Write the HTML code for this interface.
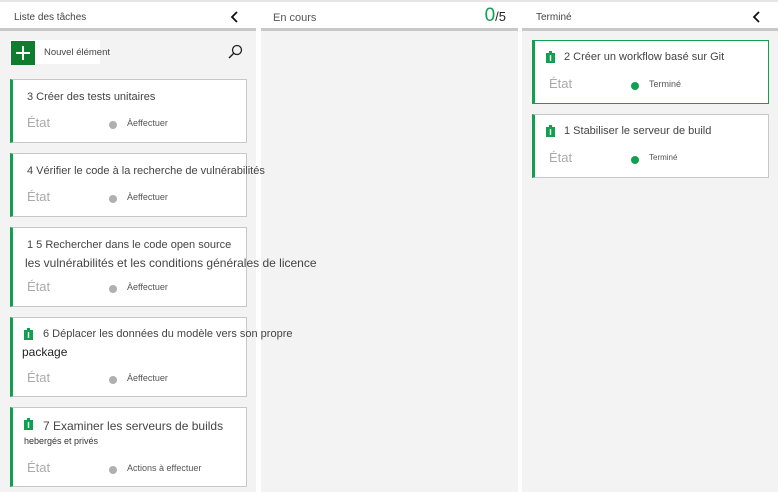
<!DOCTYPE html>
<html><head><meta charset="utf-8"><style>
*{margin:0;padding:0;box-sizing:border-box}
body{width:778px;height:494px;background:#fff;font-family:"Liberation Sans",sans-serif;position:relative;overflow:hidden;color:#333}
.topline{position:absolute;left:0;top:0;width:778px;height:2px;background:#e6e6e6}
.col{position:absolute;top:2px;bottom:2px;background:#f3f3f3}
.hdr{position:absolute;left:0;right:0;top:0;height:29px;background:#fff;border-bottom:3px solid #c8c8c8;font-size:10px;color:#444}
.hdr span{position:absolute;left:14px;top:10px}
.chev{position:absolute;top:9px;width:12px;height:12px}
.card{position:absolute;background:#fff;border:1px solid #c8c8c8;border-left:3px solid #10a050}
.t{position:absolute;font-size:11px;color:#444;white-space:nowrap}
.etat{position:absolute;left:14px;font-size:13px;color:#aaa}
.dot{position:absolute;left:96px;width:8px;height:8px;border-radius:50%;background:#b0b0b0}
.st{position:absolute;left:114px;font-size:9px;color:#555;white-space:nowrap}
.ic{position:absolute;width:9px;height:12px}
</style></head><body>
<div class="topline"></div>

<div class="col" style="left:261px;width:257px">
 <div class="hdr"><span style="left:12px;font-size:11px;color:#555">En cours</span>
  <div style="position:absolute;right:12px;top:3px;white-space:nowrap"><span style="position:static;font-size:19px;color:#10a050">0</span><span style="position:static;font-size:13px;color:#222">/5</span></div></div>
</div>

<div class="col" style="left:0;width:256px;z-index:2">
 <div class="hdr"><span>Liste des tâches</span>
  <svg class="chev" style="left:229px" viewBox="0 0 12 12"><path d="M8 1L3 6l5 5" stroke="#111" stroke-width="1.8" fill="none"/></svg></div>
 <div style="position:absolute;left:10px;top:38px;width:90px;height:24px;background:#fff"></div>
 <div style="position:absolute;left:11px;top:39px;width:24px;height:24px;background:#107c2e"></div>
 <svg style="position:absolute;left:11px;top:39px" width="24" height="24"><path d="M12 5v14M5 12h14" stroke="#fff" stroke-width="2"/></svg>
 <div style="position:absolute;left:44px;top:45px;font-size:9.5px;color:#444">Nouvel élément</div>
 <svg style="position:absolute;left:227px;top:42px" width="16" height="16"><circle cx="10" cy="6" r="4.5" stroke="#222" stroke-width="1.3" fill="none"/><path d="M7 9L2 14" stroke="#222" stroke-width="1.5"/></svg>

 <div class="card" style="left:10px;top:77px;width:237px;height:64px">
  <div class="t" style="left:14px;top:11px">3 Créer des tests unitaires</div>
  <div class="etat" style="top:35px">État</div><div class="dot" style="top:41px"></div><div class="st" style="top:38px">Àeffectuer</div></div>
 <div class="card" style="left:10px;top:151px;width:237px;height:64px">
  <div class="t" style="left:14px;top:11px">4 Vérifier le code à la recherche de vulnérabilités</div>
  <div class="etat" style="top:35px">État</div><div class="dot" style="top:41px"></div><div class="st" style="top:38px">Àeffectuer</div></div>
 <div class="card" style="left:10px;top:225px;width:237px;height:80px">
  <div class="t" style="left:14px;top:11px">1 5 Rechercher dans le code open source</div>
  <div class="t" style="left:12px;top:28px;font-size:12px">les vulnérabilités et les conditions générales de licence</div>
  <div class="etat" style="top:51px">État</div><div class="dot" style="top:57px"></div><div class="st" style="top:54px">Àeffectuer</div></div>
 <div class="card" style="left:10px;top:315px;width:237px;height:80px">
  <svg class="ic" style="left:11px;top:10px" viewBox="0 0 9 12"><rect x="0" y="2" width="9" height="10" fill="#10a050"/><rect x="3" y="0" width="3" height="3" fill="#10a050"/><rect x="3.8" y="4" width="1.4" height="6" fill="#fff"/></svg>
  <div class="t" style="left:30px;top:10px">6 Déplacer les données du modèle vers son propre</div>
  <div class="t" style="left:9px;top:27px;font-size:12px;color:#222">package</div>
  <div class="etat" style="top:52px">État</div><div class="dot" style="top:58px"></div><div class="st" style="top:55px">Àeffectuer</div></div>
 <div class="card" style="left:10px;top:405px;width:237px;height:80px">
  <svg class="ic" style="left:11px;top:10px" viewBox="0 0 9 12"><rect x="0" y="2" width="9" height="10" fill="#10a050"/><rect x="3" y="0" width="3" height="3" fill="#10a050"/><rect x="3.8" y="4" width="1.4" height="6" fill="#fff"/></svg>
  <div class="t" style="left:30px;top:11px;font-size:12px">7 Examiner les serveurs de builds</div>
  <div class="t" style="left:11px;top:28px;font-size:9px;color:#333">hebergés et privés</div>
  <div class="etat" style="top:52px">État</div><div class="dot" style="top:58px"></div><div class="st" style="top:55px">Actions à effectuer</div></div>
</div>

<div class="col" style="left:522px;width:256px">
 <div class="hdr"><span>Terminé</span>
  <svg class="chev" style="left:229px" viewBox="0 0 12 12"><path d="M8 1L3 6l5 5" stroke="#111" stroke-width="1.8" fill="none"/></svg></div>
 <div class="card" style="left:10px;top:38px;width:237px;height:64px;border-color:#10a050">
  <svg class="ic" style="left:11px;top:10px" viewBox="0 0 9 12"><rect x="0" y="2" width="9" height="10" fill="#10a050"/><rect x="3" y="0" width="3" height="3" fill="#10a050"/><rect x="3.8" y="4" width="1.4" height="6" fill="#fff"/></svg>
  <div class="t" style="left:29px;top:10px">2 Créer un workflow basé sur Git</div>
  <div class="etat" style="top:35px">État</div><div class="dot" style="top:41px;background:#10a050"></div><div class="st" style="top:38px">Terminé</div></div>
 <div class="card" style="left:10px;top:112px;width:237px;height:64px">
  <svg class="ic" style="left:11px;top:10px" viewBox="0 0 9 12"><rect x="0" y="2" width="9" height="10" fill="#10a050"/><rect x="3" y="0" width="3" height="3" fill="#10a050"/><rect x="3.8" y="4" width="1.4" height="6" fill="#fff"/></svg>
  <div class="t" style="left:29px;top:10px">1 Stabiliser le serveur de build</div>
  <div class="etat" style="top:35px">État</div><div class="dot" style="top:41px;background:#10a050"></div><div class="st" style="top:38px;font-size:8px">Terminé</div></div>
</div>
</body></html>
